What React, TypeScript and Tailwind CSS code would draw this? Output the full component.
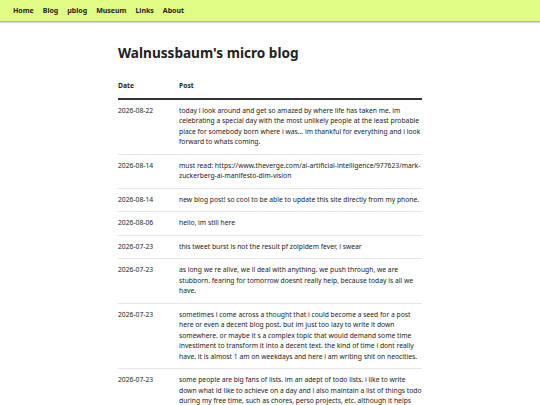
const posts = [
  {
    date: '2026-08-22',
    text: 'today i look around and get so amazed by where life has taken me. im celebrating a special day with the most unlikely people at the least probable place for somebody born where i was... im thankful for everything and i look forward to whats coming.',
  },
  {
    date: '2026-08-14',
    text: 'must read: https://www.theverge.com/ai-artificial-intelligence/977623/mark-zuckerberg-ai-manifesto-dim-vision',
  },
  {
    date: '2026-08-14',
    text: 'new blog post! so cool to be able to update this site directly from my phone.',
  },
  { date: '2026-08-06', text: 'hello, im still here' },
  { date: '2026-07-23', text: 'this tweet burst is not the result pf zolpidem fever, i swear' },
  {
    date: '2026-07-23',
    text: 'as long we re alive, we ll deal with anything. we push through, we are stubborn. fearing for tomorrow doesnt really help, because today is all we have.',
  },
  {
    date: '2026-07-23',
    text: 'sometimes i come across a thought that i could become a seed for a post here or even a decent blog post. but im just too lazy to write it down somewhere. or maybe it s a complex topic that would demand some time investiment to transform it into a decent text. the kind of time i dont really have. it is almost 1 am on weekdays and here i am writing shit on neocities.',
  },
  {
    date: '2026-07-23',
    text: 'some people are big fans of lists. im an adept of todo lists. i like to write down what id like to achieve on a day and i also maintain a list of things todo during my free time, such as chores, perso projects, etc. although it helps me a lot to stay organized, it also makes me anxious sometimes.',
  },
];

const links = ['Home', 'Blog', 'µblog', 'Museum', 'Links', 'About'];

export default function App() {
  return (
    <div className="min-h-screen bg-white text-[#222] font-['Noto_Sans',sans-serif]">
      {/* top nav */}
      <nav className="h-[22px] bg-[#e1fc84] border-b border-[#b5b5a0] shadow-[0_1px_1px_rgba(0,0,0,0.15)] flex items-center gap-[9px] px-[13px]">
        {links.map((l) => (
          <a key={l} className="text-[7px] font-bold text-[#222] leading-none">
            {l}
          </a>
        ))}
      </nav>

      <main className="w-[304px] mx-auto pt-[22px]">
        <h1 className="text-[13.6px] font-bold leading-[17px] mb-[20px]">Walnussbaum's micro blog</h1>

        <table className="w-full border-collapse text-[6.76px] leading-[10.5px]">
          <thead>
            <tr className="border-b-2 border-[#333]">
              <th className="w-[61px] text-left font-bold pb-[6px] align-top">Date</th>
              <th className="text-left font-bold pb-[6px] align-top">Post</th>
            </tr>
          </thead>
          <tbody>
            {posts.map((p, i) => (
              <tr key={i} className="border-b border-[#e5e5e5]">
                <td className="py-[6px] align-top whitespace-nowrap">{p.date}</td>
                <td className="py-[6px] align-top">{p.text}</td>
              </tr>
            ))}
          </tbody>
        </table>
      </main>
    </div>
  );
}
